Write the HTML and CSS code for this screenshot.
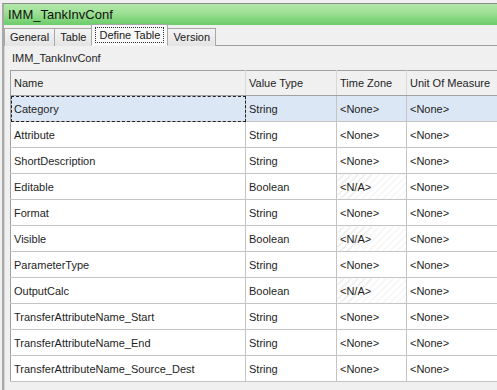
FILE: index.html
```html
<!DOCTYPE html>
<html lang="en">
<head>
	<meta charset="UTF-8">
	<title>IMM_TankInvConf</title>
	<link rel="stylesheet" href="styles.css">
</head>
<body>
	<!-- window frame -->
	<div class="win">
		<div class="titlebar">IMM_TankInvConf</div>
		<!-- tabs -->
		<div class="tabs">
			<div class="tab">General</div>
			<div class="tab">Table</div>
			<div class="tab on"><span>Define Table</span></div>
			<div class="tab">Version</div>
		</div>
		<!-- page content -->
		<div class="panel">
			<div class="caption">IMM_TankInvConf</div>
			<table class="grid">
				<colgroup>
					<col class="c-name">
					<col class="c-type">
					<col class="c-zone">
					<col class="c-unit">
				</colgroup>
				<thead>
					<tr>
						<th>Name</th>
						<th>Value Type</th>
						<th>Time Zone</th>
						<th>Unit Of Measure</th>
					</tr>
				</thead>
				<tbody>
					<tr class="sel"><td class="focus">Category</td><td>String</td><td>&lt;None&gt;</td><td>&lt;None&gt;</td></tr>
					<tr><td>Attribute</td><td>String</td><td>&lt;None&gt;</td><td>&lt;None&gt;</td></tr>
					<tr><td>ShortDescription</td><td>String</td><td>&lt;None&gt;</td><td>&lt;None&gt;</td></tr>
					<tr><td>Editable</td><td>Boolean</td><td class="na">&lt;N/A&gt;</td><td>&lt;None&gt;</td></tr>
					<tr><td>Format</td><td>String</td><td>&lt;None&gt;</td><td>&lt;None&gt;</td></tr>
					<tr><td>Visible</td><td>Boolean</td><td class="na">&lt;N/A&gt;</td><td>&lt;None&gt;</td></tr>
					<tr><td>ParameterType</td><td>String</td><td>&lt;None&gt;</td><td>&lt;None&gt;</td></tr>
					<tr><td>OutputCalc</td><td>Boolean</td><td class="na">&lt;N/A&gt;</td><td>&lt;None&gt;</td></tr>
					<tr><td>TransferAttributeName_Start</td><td>String</td><td>&lt;None&gt;</td><td>&lt;None&gt;</td></tr>
					<tr><td>TransferAttributeName_End</td><td>String</td><td>&lt;None&gt;</td><td>&lt;None&gt;</td></tr>
					<tr><td>TransferAttributeName_Source_Dest</td><td>String</td><td>&lt;None&gt;</td><td>&lt;None&gt;</td></tr>
				</tbody>
			</table>
		</div>
	</div>
</body>
</html>
```

FILE: styles.css
```css
* {
	margin: 0;
	padding: 0;
	box-sizing: border-box;
}
html, body {
	height: 100%;
	overflow: hidden;
}
body {
	background-color: #f0f0f0;
	font-family: "Liberation Sans", Arial, sans-serif;
	font-size: 11px;
	color: #1e1e1e;
}
.win {
	margin: 3px 0 0 2px;
	height: calc(100% - 3px);
	border-top: 1px solid #8c8c8c;
	border-left: 2px solid #a8a8a8;
	overflow: hidden;
}
.titlebar {
	height: 21px;
	line-height: 21px;
	padding-left: 4px;
	font-size: 13px;
	color: #101010;
	background: linear-gradient(#b4e8ac, #9fe096 40%, #6ccc6a);
}
.tabs {
	display: flex;
	align-items: flex-end;
	height: 21px;
	border-bottom: 1px solid #a0a0a0;
}
.tab {
	height: 18px;
	line-height: 17px;
	padding: 0 5px;
	margin-bottom: -1px;
	border: 1px solid #a8a8a8;
	border-bottom: none;
	margin-right: -1px;
	background: linear-gradient(#f4f4f4, #e4e4e4);
	font-size: 11px;
	color: #202020;
}
.tab.on {
	height: 22px;
	line-height: 20px;
	padding: 0 3px;
	background: #f9f9f9;
	border-bottom: 1px solid #f9f9f9;
	position: relative;
	z-index: 1;
}
.tab.on span {
	display: inline-block;
	line-height: 14px;
	padding: 0 3px;
	border: 1px dotted #303030;
}
.panel {
	padding: 6px 0 0 5px;
	border-left: 1px solid #d4d4d4;
	height: 100%;
	overflow: hidden;
}
.caption {
	height: 18px;
	padding-left: 2px;
}
.grid {
	border-collapse: collapse;
	table-layout: fixed;
	width: 520px;
	border: 1px solid #a0a0a0;
	background-color: #fff;
}
.c-name { width: 235px; }
.c-type { width: 91px; }
.c-zone { width: 70px; }
.c-unit { width: 124px; }
.grid th {
	height: 25px;
	text-align: left;
	font-weight: normal;
	padding-left: 3px;
	background-color: #f0f0f0;
	border-bottom: 1px solid #a0a0a0;
	border-left: 1px solid #d8d8d8;
}
.grid th:first-child {
	border-left: none;
}
.grid td {
	height: 26px;
	padding-left: 3px;
	border: 1px solid #c4c4c4;
	border-top: none;
	white-space: nowrap;
	overflow: hidden;
}
.grid td:first-child {
	border-left: none;
}
.grid tr.sel td {
	background-color: #dce7f5;
}
.grid td.focus {
	outline: 1px dashed #202020;
	outline-offset: -1px;
}
.grid td.na {
	background: repeating-linear-gradient(135deg, #fff 0 4px, #ebebeb 4px 5px);
}
```
